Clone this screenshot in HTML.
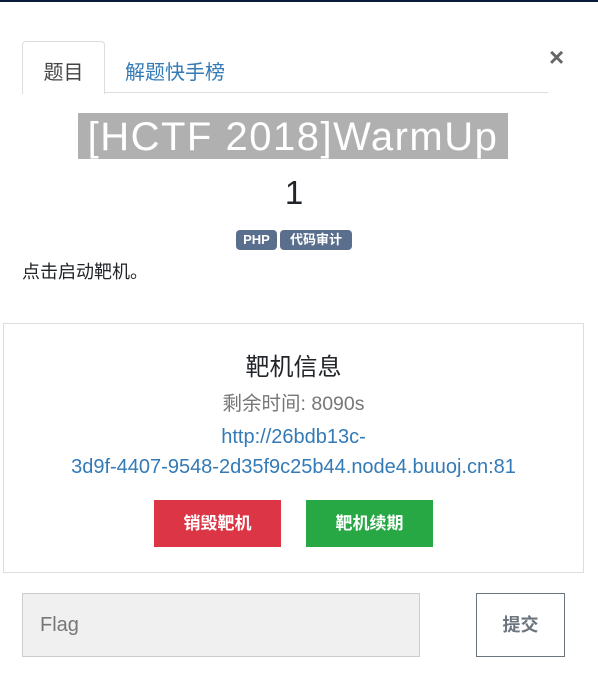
<!DOCTYPE html>
<html><head><meta charset="utf-8"><style>
body{margin:0;width:598px;height:700px;background:#fff;font-family:"Liberation Sans","Noto Sans CJK SC",sans-serif;position:relative;overflow:hidden;color:#212529}
.a{position:absolute}
</style></head><body>
<div class="a" style="left:0;top:0;width:598px;height:2px;background:#0b1a3a"></div>
<div class="a" style="left:22px;top:41px;width:81px;height:52px;border:1px solid #ddd;border-bottom:none;border-radius:4px 4px 0 0;background:#fff;z-index:2"></div>
<div class="a" style="left:22px;top:92px;width:526px;height:1px;background:#ddd"></div>
<div class="a" style="left:22px;top:56px;width:83px;text-align:center;font-size:20px;color:#444;z-index:3">题目</div>
<div class="a" style="left:125px;top:56px;font-size:20px;color:#337ab7">解题快手榜</div>
<div class="a" style="left:549px;top:42px;font-size:26px;font-weight:bold;color:#666">×</div>
<div class="a" style="left:78px;top:113px;width:430px;height:46px;background:#b0b0b0;color:#fff;font-size:40px;text-align:center;line-height:48px;letter-spacing:1.5px;white-space:nowrap">[HCTF 2018]WarmUp</div>
<div class="a" style="left:0;top:174px;width:588px;text-align:center;font-size:33px">1</div>
<div class="a" style="left:236px;top:230px;width:41px;height:20px;background:#5a6f8e;border-radius:4px;color:#fff;font-size:13px;font-weight:bold;text-align:center;line-height:20px">PHP</div>
<div class="a" style="left:280px;top:230px;width:72px;height:20px;background:#5a6f8e;border-radius:4px;color:#fff;font-size:13px;font-weight:bold;text-align:center;line-height:20px">代码审计</div>
<div class="a" style="left:22px;top:258px;font-size:18px">点击启动靶机。</div>
<div class="a" style="left:3px;top:323px;width:579px;height:248px;border:1px solid #ddd"></div>
<div class="a" style="left:3px;top:347px;width:581px;text-align:center;font-size:24px">靶机信息</div>
<div class="a" style="left:3px;top:387px;width:581px;text-align:center;font-size:19.5px;color:#777">剩余时间: 8090s</div>
<div class="a" style="left:3px;top:422px;width:581px;text-align:center;font-size:20px;line-height:30px;color:#337ab7">http://26bdb13c-<br>3d9f-4407-9548-2d35f9c25b44.node4.buuoj.cn:81</div>
<div class="a" style="left:154px;top:500px;width:127px;height:47px;background:#dc3545;color:#fff;font-size:17px;font-weight:bold;text-align:center;line-height:47px">销毁靶机</div>
<div class="a" style="left:306px;top:500px;width:127px;height:47px;background:#28a745;color:#fff;font-size:17px;font-weight:bold;text-align:center;line-height:47px">靶机续期</div>
<div class="a" style="left:22px;top:593px;width:396px;height:62px;background:#f0f0f0;border:1px solid #ccc;font-size:20px;color:#777;line-height:62px;text-indent:17px">Flag</div>
<div class="a" style="left:476px;top:593px;width:87px;height:62px;border:1px solid #6c757d;font-size:18px;font-weight:bold;color:#6c757d;text-align:center;line-height:62px">提交</div>
</body></html>
